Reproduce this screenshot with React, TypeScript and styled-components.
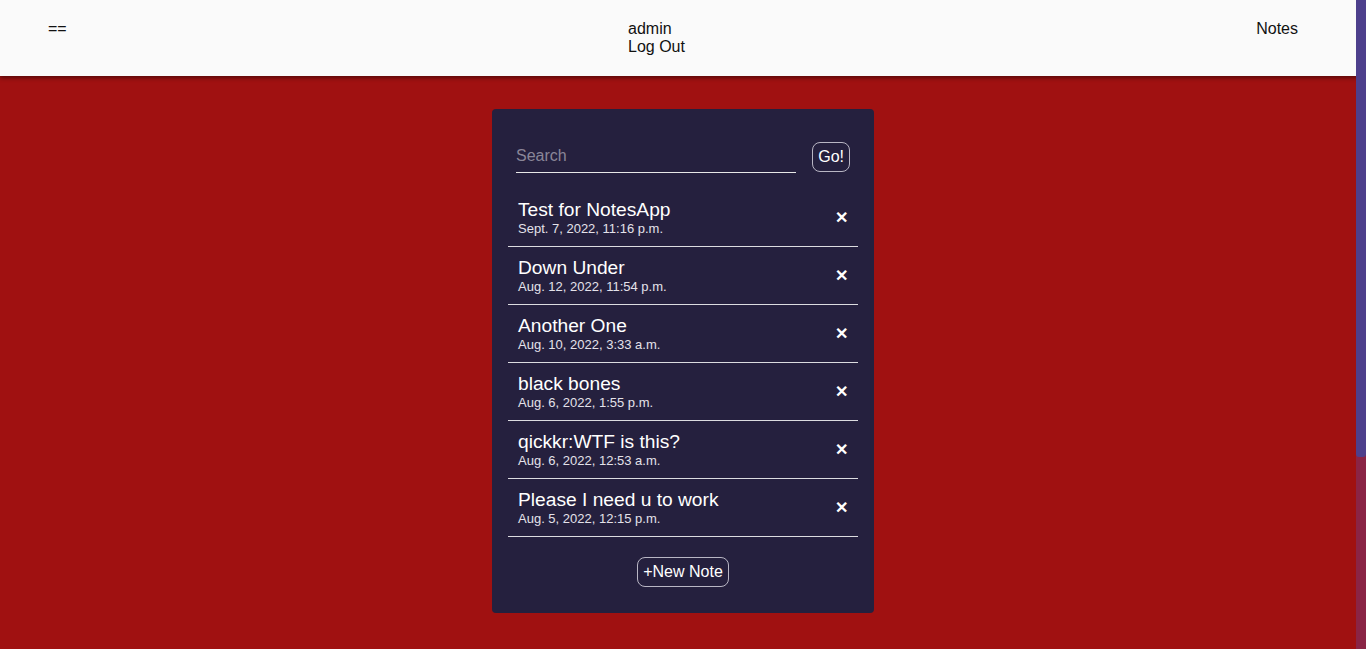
import React from "react";
import styled, { createGlobalStyle } from "styled-components";

const Global = createGlobalStyle`
  html {
    background: #a01111;
  }
  body {
    margin: 0;
    background: #a01111;
    font-family: "Liberation Sans", Arial, sans-serif;
  }
`;

const Page = styled.div`
  min-height: 649px;
  display: flex;
  flex-direction: column;
`;

const Header = styled.header`
  height: 76px;
  box-sizing: border-box;
  background: #fafafa;
  box-shadow: 0 2px 4px rgba(0, 0, 0, 0.45);
  display: flex;
  align-items: flex-start;
  padding: 20px 68px 0 48px;
  font-size: 16px;
  line-height: 18px;
  color: #111;
`;

const NavItem = styled.div<{ $width?: number; $push?: boolean }>`
  display: flex;
  flex-direction: column;
  ${(p) => (p.$width ? `width: ${p.$width}px;` : "")}
  ${(p) => (p.$push ? "margin-left: auto;" : "")}
`;

const Main = styled.main`
  display: flex;
  justify-content: center;
  padding-top: 33px;
`;

const Card = styled.section`
  width: 382px;
  box-sizing: border-box;
  background: #25203e;
  border-radius: 4px;
  padding: 33px 16px 25px;
  display: flex;
  flex-direction: column;
`;

const SearchRow = styled.form`
  display: flex;
  align-items: flex-end;
  justify-content: space-between;
  padding: 0 8px;
  margin-bottom: 16px;
`;

const SearchInput = styled.input`
  width: 280px;
  height: 31px;
  box-sizing: border-box;
  background: transparent;
  border: none;
  border-bottom: 1px solid #e8e8e8;
  color: #fff;
  font-family: inherit;
  font-size: 16px;
  padding: 0 0 3px;
  margin: 0;
  outline: none;
  &::placeholder {
    color: #8a8698;
  }
`;

const OutlineButton = styled.button`
  background: transparent;
  border: 1px solid #b9b6c4;
  border-radius: 8px;
  color: #fff;
  font-family: inherit;
  font-size: 16px;
  height: 30px;
  padding: 0 5px;
  margin: 0 0 1px;
  cursor: pointer;
`;

const List = styled.ul`
  list-style: none;
  margin: 0;
  padding: 0;
`;

const Row = styled.li`
  height: 58px;
  box-sizing: border-box;
  border-bottom: 1px solid #dcdce0;
  display: flex;
  align-items: center;
  justify-content: space-between;
  padding: 0 10px 0 10px;
`;

const RowText = styled.div`
  display: flex;
  flex-direction: column;
`;

const Title = styled.span`
  color: #fff;
  font-size: 19.2px;
  line-height: 22px;
`;

const DateText = styled.span`
  color: #e4e2ea;
  font-size: 13px;
  line-height: 15px;
`;

const Close = styled.span`
  color: #fff;
  font-size: 16px;
  font-weight: bold;
  margin-right: 0;
`;

const Footer = styled.div`
  display: flex;
  justify-content: center;
  margin-top: 20px;
`;

const ScrollTrack = styled.div`
  position: fixed;
  top: 0;
  right: 0;
  width: 10px;
  height: 100vh;
  background: #8a2445;
  display: flex;
  flex-direction: column;
`;

const ScrollThumb = styled.div`
  height: 457px;
  background: #4d3f8c;
  border-radius: 0 0 3px 3px;
`;

const notes = [
  { title: "Test for NotesApp", date: "Sept. 7, 2022, 11:16 p.m." },
  { title: "Down Under", date: "Aug. 12, 2022, 11:54 p.m." },
  { title: "Another One", date: "Aug. 10, 2022, 3:33 a.m." },
  { title: "black bones", date: "Aug. 6, 2022, 1:55 p.m." },
  { title: "qickkr:WTF is this?", date: "Aug. 6, 2022, 12:53 a.m." },
  { title: "Please I need u to work", date: "Aug. 5, 2022, 12:15 p.m." },
];

export default function App() {
  return (
    <Page>
      <Global />
      <Header>
        <NavItem $width={580}>==</NavItem>
        <NavItem>
          <span>admin</span>
          <span>Log Out</span>
        </NavItem>
        <NavItem $push>Notes</NavItem>
      </Header>
      <Main>
        <Card>
          <SearchRow onSubmit={(e) => e.preventDefault()}>
            <SearchInput placeholder="Search" />
            <OutlineButton type="submit">Go!</OutlineButton>
          </SearchRow>
          <List>
            {notes.map((n) => (
              <Row key={n.title}>
                <RowText>
                  <Title>{n.title}</Title>
                  <DateText>{n.date}</DateText>
                </RowText>
                <Close>✕</Close>
              </Row>
            ))}
          </List>
          <Footer>
            <OutlineButton>+New Note</OutlineButton>
          </Footer>
        </Card>
      </Main>
      <ScrollTrack>
        <ScrollThumb />
      </ScrollTrack>
    </Page>
  );
}
